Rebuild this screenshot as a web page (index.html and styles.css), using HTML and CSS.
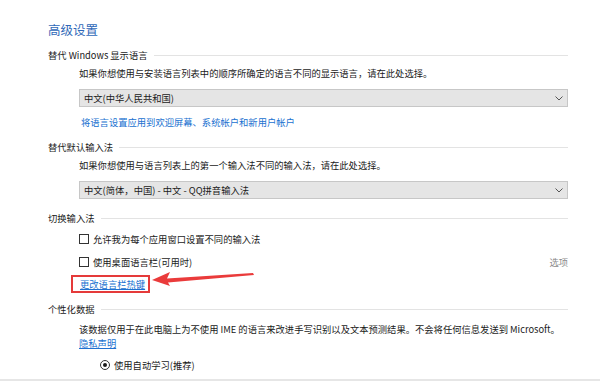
FILE: index.html
```html
<!DOCTYPE html>
<html lang="zh-CN">
<head>
<meta charset="utf-8">
<link rel="stylesheet" href="styles.css">
</head>
<body>
<div class="page">
  <h1 class="title">高级设置</h1>

  <div class="section-head sh1"><span>替代 Windows 显示语言</span><i class="rule"></i></div>
  <div class="indent">
    <p class="desc">如果你想使用与安装语言列表中的顺序所确定的语言不同的显示语言，请在此处选择。</p>
    <div class="select"><span>中文(中华人民共和国)</span><svg class="chev" width="8" height="5" viewBox="0 0 8 5"><path d="M0.5 0.5 L4 4 L7.5 0.5" fill="none" stroke="#555" stroke-width="1"/></svg></div>
    <a class="link link-apply">将语言设置应用到欢迎屏幕、系统帐户和新用户帐户</a>
  </div>

  <div class="section-head sh2"><span>替代默认输入法</span><i class="rule"></i></div>
  <div class="indent">
    <p class="desc">如果你想使用与语言列表上的第一个输入法不同的输入法，请在此处选择。</p>
    <div class="select"><span>中文(简体，中国) - 中文 - QQ拼音输入法</span><svg class="chev" width="8" height="5" viewBox="0 0 8 5"><path d="M0.5 0.5 L4 4 L7.5 0.5" fill="none" stroke="#555" stroke-width="1"/></svg></div>
  </div>

  <div class="section-head sh3"><span>切换输入法</span><i class="rule"></i></div>
  <div class="indent">
    <label class="check c1"><i class="box"></i><span>允许我为每个应用窗口设置不同的输入法</span></label>
    <div class="check-row">
      <label class="check"><i class="box"></i><span>使用桌面语言栏(可用时)</span></label>
      <span class="options">选项</span>
    </div>
    <div class="hotkey">
      <a class="link ul">更改语言栏热键</a>
      <span class="annot-box"></span>
      <svg class="annot-arrow" width="104" height="16" viewBox="0 0 104 16"><polygon points="0,9 18,1 15,7.5 101,2 102,4 16,11.5 18,15" fill="#ea3b3b"/></svg>
    </div>
  </div>

  <div class="section-head sh4"><span>个性化数据</span><i class="rule"></i></div>
  <div class="indent">
    <p class="desc desc4">该数据仅用于在此电脑上为不使用 IME 的语言来改进手写识别以及文本预测结果。不会将任何信息发送到 Microsoft。</p>
    <a class="link ul privacy">隐私声明</a>
    <label class="radio"><i class="dot"></i><span>使用自动学习(推荐)</span></label>
  </div>
</div>
<div class="bottom-rule"></div>
</body>
</html>
```
FILE: styles.css
```css
html, body {
  margin: 0;
  padding: 0;
  background: #ffffff;
}
body {
  width: 600px;
  height: 381px;
  overflow: hidden;
  position: relative;
  font-family: "Noto Sans CJK SC", "Noto Sans", sans-serif;
  font-size: 9.3px;
  line-height: 14px;
  color: #1a1a1a;
}
.page {
  padding: 22px 32px 0 48px;
}
.title {
  margin: 0;
  font-size: 12.5px;
  font-weight: normal;
  line-height: 16px;
  color: #2f68b8;
}
.section-head {
  display: flex;
  align-items: center;
  height: 14px;
  color: #1a1a1a;
}
.section-head .rule {
  flex: 1;
  height: 1px;
  background: #e3e3e3;
  margin-left: 6px;
}
.sh1 { margin-top: 10px; }
.sh2 { margin-top: 11px; }
.sh3 { margin-top: 12px; }
.sh4 { margin-top: 11px; }
.indent {
  padding-left: 31px;
}
.desc {
  margin: 4px 0 0;
  height: 14px;
}
.select {
  margin-top: 9px;
  height: 16px;
  border: 1px solid #c7c7c7;
  background: #e5e5e5;
  display: flex;
  align-items: center;
  justify-content: space-between;
  padding: 0 4px;
  line-height: 16px;
}
.chev { display: block; }
.link {
  display: block;
  width: fit-content;
  height: 14px;
  color: #2071d0;
}
.link-apply {
  margin-top: 8px;
  margin-left: 2px;
}
.ul { text-decoration: underline; }
.check {
  display: flex;
  align-items: center;
  height: 14px;
}
.c1 { margin-top: 7px; }
.box {
  width: 8px;
  height: 8px;
  border: 1px solid #333;
  margin-right: 4px;
  flex: none;
}
.check-row {
  display: flex;
  justify-content: space-between;
  align-items: center;
  margin-top: 9px;
  height: 14px;
}
.options {
  color: #8a8a8a;
}
.hotkey {
  position: relative;
  margin-top: 8px;
  height: 14px;
  padding-left: 1px;
}
.annot-box {
  position: absolute;
  left: -8px;
  top: -2px;
  width: 75px;
  height: 14px;
  border: 2px solid #e53a3a;
}
.annot-arrow {
  position: absolute;
  left: 73px;
  top: -6px;
}
.desc4 {
  margin-top: 6px;
}
.radio {
  display: flex;
  align-items: center;
  margin-top: 8px;
  padding-left: 21px;
  height: 14px;
}
.dot {
  width: 8px;
  height: 8px;
  border: 1px solid #333;
  border-radius: 50%;
  margin-right: 4px;
  position: relative;
  flex: none;
}
.dot::after {
  content: "";
  position: absolute;
  left: 2px;
  top: 2px;
  width: 4px;
  height: 4px;
  border-radius: 50%;
  background: #1a1a1a;
}
.bottom-rule {
  position: absolute;
  left: 0;
  right: 0;
  top: 379px;
  height: 2px;
  background: #e6e6e6;
}
```
